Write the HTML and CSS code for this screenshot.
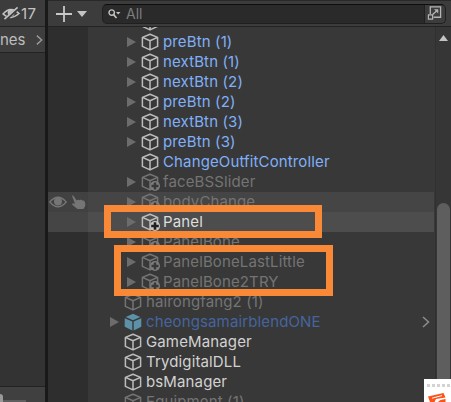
FILE: index.html
```html
<!DOCTYPE html>
<html lang="en">
<head>
<meta charset="utf-8">
<title>Hierarchy</title>
<link rel="stylesheet" href="styles.css">
</head>
<body>
<svg class="defs" aria-hidden="true">
  <symbol id="cube" viewBox="0 0 18 18"><path d="M9 1.2 16.6 4.4V13.4L9 16.9 1.4 13.4V4.4ZM1.4 4.4 9 7.8 16.6 4.4M9 7.8V16.9" fill="none" stroke="currentColor" stroke-width="1.5" stroke-linejoin="round"/></symbol>
  <symbol id="prefab" viewBox="0 0 18 18"><path d="M9 .8 16.3 3.9 9 7.2 1.7 3.9ZM.7 5.2 8.3 8.5V17.4L.7 13.8ZM17.3 5.2 9.7 8.5V17.4L17.3 13.8Z" fill="currentColor"/></symbol>
</svg>
<div class="window">
  <aside class="side">
    <div class="side-top"><svg class="hidden-eye" viewBox="0 0 20 16"><path d="M1 8.500Q9-.5 18 8Q9 16 1 8.500Z" fill="none" stroke="currentColor" stroke-width="1.7"/><circle cx="9.500" cy="7.500" r="3.600" fill="currentColor"/><path d="M3 15 17.500 2" stroke="#3c3c3c" stroke-width="3.500"/><path d="M2.500 14 16.500 1.500" stroke="currentColor" stroke-width="1.700"/></svg><span>17</span></div>
    <div class="side-crumb"><span>nes</span><svg class="crumb-arrow" viewBox="0 0 8 12"><path d="M1 1 6.500 6 1 11" fill="none" stroke="currentColor" stroke-width="1.600"/></svg></div>
    <div class="side-body"></div>
    <div class="side-foot"><i class="knob"></i><i class="track"></i></div>
  </aside>
  <main class="hierarchy">
    <header class="toolbar">
      <svg class="plus" viewBox="0 0 16 16"><path d="M8 0V16M0 8H16" stroke="currentColor" stroke-width="1.800"/></svg>
      <svg class="drop" viewBox="0 0 10 6"><path d="M0 0H10L5 6Z" fill="currentColor"/></svg>
      <div class="search">
        <svg class="lens" viewBox="0 0 13 10"><circle cx="3.700" cy="3.600" r="2.700" fill="none" stroke="currentColor" stroke-width="1.400"/><path d="M5.500 5.500 8.500 9" stroke="currentColor" stroke-width="1.700"/><path d="M8 3H12.500L10.200 5.500Z" fill="currentColor"/></svg>
        <span class="query">All</span>
        <svg class="expand" viewBox="0 0 16 16"><path d="M3.500 9V1.500H14.500V12.500H7" fill="none" stroke="currentColor" stroke-width="1.400"/><path d="M1.500 10H6V14.500H1.500Z" fill="none" stroke="currentColor" stroke-width="1.300"/><path d="M6 9.500 10.500 5.500" stroke="currentColor" stroke-width="1.400"/><path d="M7.500 4H12V8.500Z" fill="currentColor"/></svg>
      </div>
    </header>
    <div class="content">
      <div class="tree" id="tree"></div>
      <div class="scroll"><svg class="up" viewBox="0 0 9 6"><path d="M0 6H9L4.500 0Z" fill="currentColor"/></svg><div class="thumb"></div></div>
    </div>
  </main>
  <div class="mark mark-one"></div>
  <div class="mark mark-two"></div>
  <div class="badge"><div class="dots"></div><svg class="logo" viewBox="0 0 20 9"><path d="M1 3.500 16.500 0 18.500 4.500 9 6 7.500 9H3Z" fill="#fc5318"/><path d="M5 5.200 15 2.600" stroke="#fff" stroke-width="1"/><path d="M11 9Q12.500 6.500 18.500 6V9Z" fill="#fc5318"/></svg></div>
</div>
<script src="tree.js"></script>
</body>
</html>
```
FILE: styles.css
```css
* { box-sizing: border-box; }
body { margin: 0; background: #383838; font-family: Inter, "Liberation Sans", sans-serif; font-size: 15px; color: #d2d2d2; }
svg { display: block; flex: none; }
.defs { position: absolute; width: 0; height: 0; }
.window { position: relative; display: flex; width: 451px; height: 402px; overflow: hidden; }
.side { display: flex; flex-direction: column; width: 48px; border-right: 3px solid #191919; background: #333; }
.side-top { display: flex; align-items: center; height: 27px; padding-left: 2px; border-bottom: 1px solid #232323; background: #3c3c3c; color: #c4c4c4; letter-spacing: .3px; }
.hidden-eye { width: 19px; height: 15px; }
.side-crumb { display: flex; align-items: center; height: 26px; border-bottom: 1px solid #232323; background: #3e3e3e; color: #bdbdbd; }
.crumb-arrow { width: 7px; height: 12px; margin-left: 10px; color: #999; }
.side-body { flex: 1; }
.side-foot { display: flex; align-items: flex-end; height: 16px; border-top: 1px solid #222; background: #404040; overflow: hidden; }
.hierarchy { display: flex; flex: 1; flex-direction: column; min-width: 0; }
.knob { width: 3px; height: 8px; border-radius: 0 5px 0 0; background: #999; }
.track { width: 23px; height: 2px; background: #5e5e5e; }
.toolbar { display: flex; align-items: center; height: 27px; padding-left: 8px; border-top: 1px solid #292929; border-bottom: 1px solid #232323; background: #3c3c3c; }
.plus { width: 16px; height: 16px; color: #c8c8c8; }
.drop { width: 10px; height: 6px; margin-left: 5px; color: #c4c4c4; }
.search { display: flex; align-items: center; width: 344px; height: 20px; margin-left: 15px; padding-left: 5px; border: 1px solid #202020; border-top-color: #0e0e0e; border-radius: 5px; background: #2a2a2a; overflow: hidden; }
.lens { width: 13px; height: 10px; color: #c4c4c4; }
.query { margin-left: 5px; color: #7d7d7d; font-size: 14px; }
.expand { width: 21px; height: 19px; margin-left: auto; padding: 1px 3px 2px 2px; border-left: 1px solid #202020; background: #3c3c3c; color: #b4b4b4; }
.content { display: flex; height: 375px; overflow: hidden; }
.tree { width: 387px; margin-top: -15px; }
.row { display: flex; height: 20px; }
.gutter { display: flex; flex: none; align-items: center; width: 40px; background: #2e2e2e; color: #757575; }
.eye { width: 18px; height: 12px; margin-left: 1px; }
.hand { width: 15px; height: 15px; margin-left: 4px; }
.item { display: flex; flex: 1; align-items: center; margin-right: 1px; padding-left: 39px; }
.item.root { padding-left: 22px; }
.arrow { width: 9px; height: 10px; color: #6c6c6c; }
.cube-box { position: relative; width: 18px; height: 18px; margin-left: 5px; color: #bcbcbc; }
.cube { width: 18px; height: 18px; }
.added { position: absolute; right: -1px; bottom: 0; width: 10px; height: 10px; }
.name { margin-left: 4px; white-space: nowrap; line-height: 20px; letter-spacing: .13px; }
.blue .name { color: #80b0f8; }
.dim .name { color: #747474; }
.dim .cube-box { color: #747474; }
.linked .name { color: #45659f; }
.linked .cube-box { color: #5c91a8; }
.open { width: 8px; height: 12px; margin-left: auto; margin-right: 4px; color: #8a8a8a; }
.hover .gutter { background: #414141; }
.hover .item { background: #454545; }
.selected .gutter { background: #454545; }
.selected .item { background: #4d4d4d; }
.selected .name { color: #dedede; }
.scroll { display: flex; flex-direction: column; align-items: center; width: 16px; border-left: 1px solid #303030; background: #363636; }
.up { width: 9px; height: 6px; margin-top: 8px; color: #c4c4c4; }
.thumb { width: 13px; height: 230px; margin-top: 162px; flex: none; border-radius: 7px; background: #5e5e5e; }
.mark { position: absolute; border: 7px solid #f98937; }
.mark-one { left: 104px; top: 205px; width: 218px; height: 33px; }
.mark-two { left: 114px; top: 245px; width: 219px; height: 51px; }
.badge { position: absolute; left: 424px; top: 379px; width: 27px; height: 23px; background: #fff; overflow: hidden; }
.dots { height: 3px; margin: 5px 0 0 2px; background: radial-gradient(circle, #d2d2d2 1.4px, transparent 1.8px) 0 0 / 5px 3px repeat-x; }
.logo { width: 20px; height: 9px; margin: 6px 0 0 3px; }
```
FILE: tree.js
```js
const rows = [
  ["nextBtn", "blue"], ["preBtn (1)", "blue"], ["nextBtn (1)", "blue"],
  ["nextBtn (2)", "blue"], ["preBtn (2)", "blue"], ["nextBtn (3)", "blue"],
  ["preBtn (3)", "blue"], ["ChangeOutfitController", "blue leaf"],
  ["faceBSSlider", "dim override"], ["bodyChange", "dim override hover"],
  ["Panel", "override selected"], ["PanelBone", "dim override"],
  ["PanelBoneLastLittle", "dim override"], ["PanelBone2TRY", "dim override"],
  ["hairongfang2 (1)", "dim top leaf"], ["cheongsamairblendONE", "linked top"],
  ["GameManager", "top leaf"], ["TrydigitalDLL", "top leaf"],
  ["bsManager", "top leaf"], ["Equipment (1)", "dim top leaf"]
];
const visibility = `<svg class="eye" viewBox="0 0 18 12"><path d="M.8 6Q9-3.500 17.200 6Q9 15.500 .8 6Z" fill="none" stroke="currentColor" stroke-width="1.300"/><circle cx="9" cy="5.500" r="4" fill="currentColor"/></svg><svg class="hand" viewBox="0 0 15 15"><path d="M1 .8Q2.200 0 3 1.500L5.600 5.600 7 4.600 8.500 5.200 10 4.600 11.300 5.600 13 5.500Q15 8 14.200 11L12.500 14H6.500L1.500 10Q.3 8.500 2 8.300L4 9Z" fill="currentColor"/></svg>`;
document.getElementById("tree").innerHTML = rows.map(([name, kind]) => {
  const has = (flag) => kind.split(" ").includes(flag);
  const arrow = `<svg class="arrow" viewBox="0 0 9 10">${has("leaf") ? "" : '<path d="M0 0 9 5 0 10Z" fill="currentColor"/>'}</svg>`;
  const ring = has("selected")
    ? '<circle cx="5" cy="5" r="5" fill="#c8c8c8"/><path d="M5 1.200V8.800M1.200 5H8.800" stroke="#202020" stroke-width="2.600"/>'
    : '<circle cx="5" cy="5" r="5" fill="#7c7c7c"/><path d="M5 1.500V8.500M1.500 5H8.500" stroke="#383838" stroke-width="2.400"/>';
  const added = has("override") ? `<svg class="added" viewBox="0 0 10 10">${ring}</svg>` : "";
  const open = has("linked") ? '<svg class="open" viewBox="0 0 8 12"><path d="M1 1 6.500 6 1 11" fill="none" stroke="currentColor" stroke-width="1.600"/></svg>' : "";
  return `<div class="row ${kind}"><div class="gutter">${has("hover") ? visibility : ""}</div><div class="item${has("top") ? " root" : ""}">${arrow}<div class="cube-box"><svg class="cube"><use href="#${has("linked") ? "prefab" : "cube"}"/></svg>${added}</div><span class="name">${name}</span>${open}</div></div>`;
}).join("");
```
